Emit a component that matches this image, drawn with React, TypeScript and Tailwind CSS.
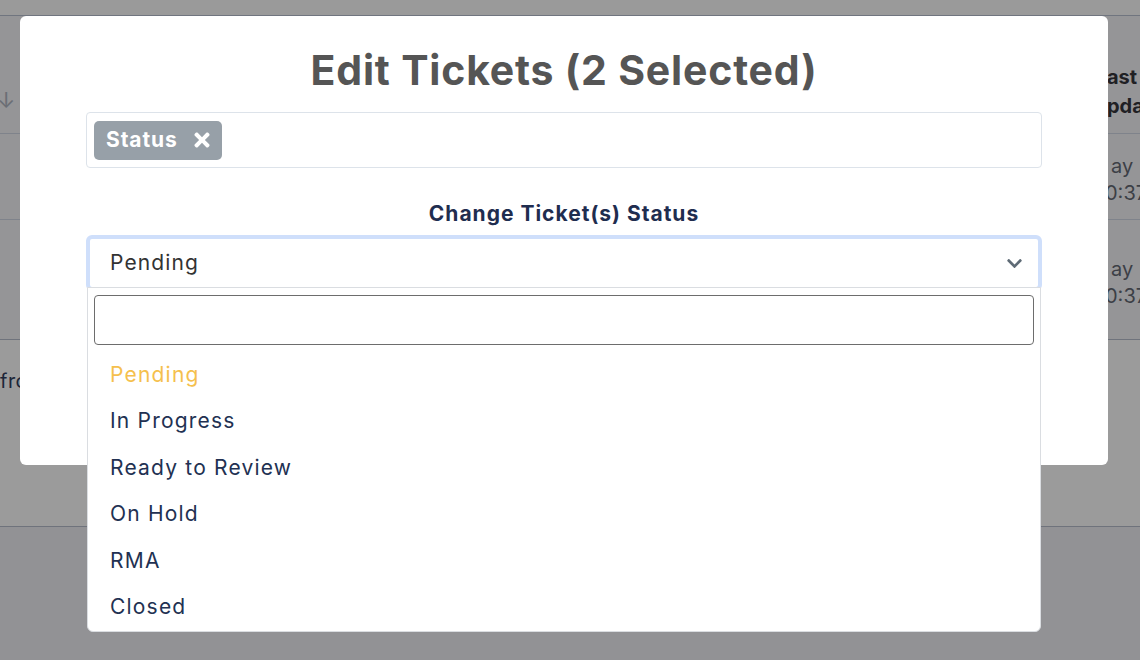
import { FaChevronDown, FaTimes } from "react-icons/fa";

const statuses = ["Pending", "In Progress", "Ready to Review", "On Hold", "RMA", "Closed"];

export default function App() {
  return (
    <div className="relative h-[660px] w-[1140px] overflow-hidden bg-[#929295] font-['Inter',sans-serif]">
      {/* Table behind the overlay */}
      <div className="flex flex-col">
        <div className="h-[16px] border-b border-[#70757f] bg-[#9a9a9a]" />
        <div className="flex h-[118px] justify-between border-b border-[#7f838b] bg-[#959597]">
          <span className="-ml-[3px] pt-[68px] text-[22px] leading-[32px] text-[#6b6e75]">↓</span>
          <div className="w-[33px] overflow-hidden whitespace-nowrap pt-[47px] text-[20px] font-bold leading-[29px] text-[#1f2024]">
            <div>ast</div>
            <div>pdated</div>
          </div>
        </div>
        <div className="flex h-[86px] justify-end border-b border-[#7f838b] bg-[#959597]">
          <div className="w-[35px] whitespace-nowrap pt-[19px] text-[20px] leading-[27px] text-[#3c3f46]">
            <div className="pl-[6px]">ay</div>
            <div>0:37</div>
          </div>
        </div>
        <div className="flex h-[120px] justify-end border-b border-[#6f737c] bg-[#959597]">
          <div className="w-[35px] whitespace-nowrap pt-[36px] text-[20px] leading-[27px] text-[#3c3f46]">
            <div className="pl-[6px]">ay</div>
            <div>0:37</div>
          </div>
        </div>
        <div className="h-[187px] border-b border-[#6f737c] bg-[#9b9b9b] pt-[26px]">
          <span className="whitespace-nowrap text-[20px] tracking-[0.5px] text-[#1c2538]">from</span>
        </div>
      </div>

      {/* Modal */}
      <div className="absolute left-[20px] top-[16px] h-[449px] w-[1088px] rounded-md bg-white px-[66px] pt-[30px]">
        <h1 className="text-center text-[41px] font-bold leading-[48px] tracking-[0.8px] text-[#555555]">
          Edit Tickets (2 Selected)
        </h1>

        <div className="mt-[18px] flex h-[56px] items-center rounded border border-[#dde3ea] px-[7px]">
          <span className="flex h-[39px] items-center gap-[13px] rounded-[5px] bg-[#97a0a8] pl-[12px] pr-[9px] text-[21px] font-bold tracking-[0.9px] text-white">
            Status
            <FaTimes className="h-[22px] w-[22px]" />
          </span>
        </div>

        <div className="mt-[34px] text-center text-[21px] font-bold leading-[24px] tracking-[1px] text-[#1f2d4f]">
          Change Ticket(s) Status
        </div>

        <div className="relative mt-[9px]">
          <div className="flex h-[56px] items-center justify-between rounded-md border-[4px] border-[#cfdffb] pl-[20px] pr-[15px] text-[21px] tracking-[1.1px] text-[#333333]">
            <span>Pending</span>
            <FaChevronDown className="h-[17px] w-[17px] text-[#5f6b76]" />
          </div>

          <div className="absolute left-px right-px top-[52px] rounded-b-md border border-[#dadde1] bg-white px-[6px] pb-px pt-[7px]">
            <div className="h-[50px] rounded-sm border border-[#6d6d6d]" />
            <ul className="mt-[6px]">
              {statuses.map((s, i) => (
                <li
                  key={s}
                  className={`flex h-[46.5px] items-center pl-[16px] text-[21px] tracking-[1.2px] ${
                    i === 0 ? "text-[#f5c04d]" : "text-[#223152]"
                  }`}
                >
                  {s}
                </li>
              ))}
            </ul>
          </div>
        </div>
      </div>
    </div>
  );
}
